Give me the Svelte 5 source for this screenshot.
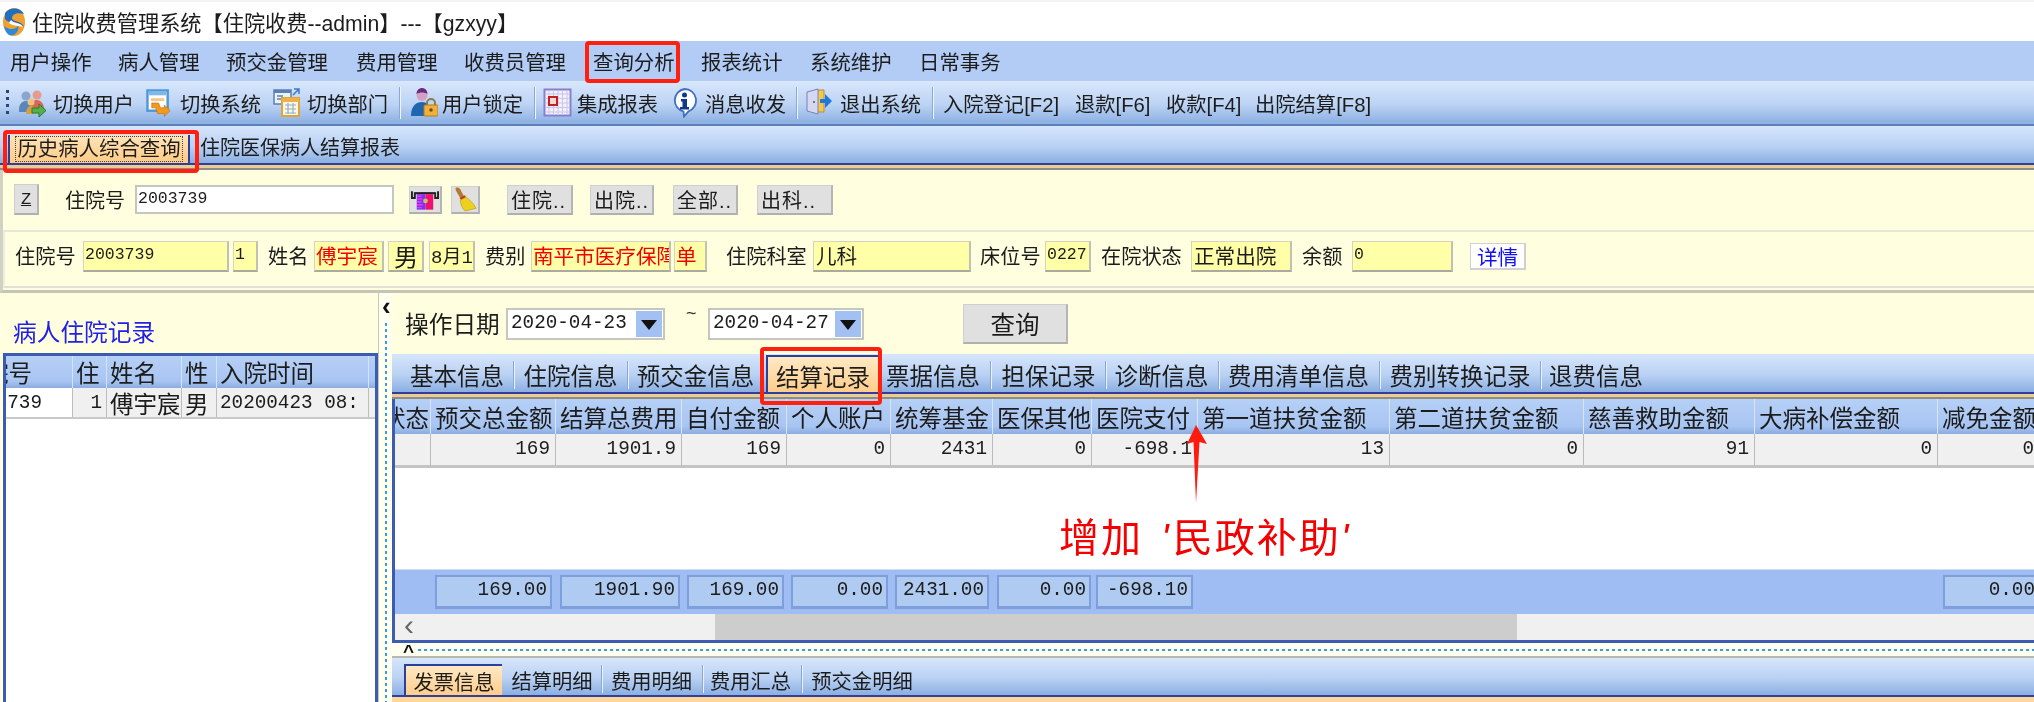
<script>
  function flow(items, origin = 0) {
    let p = origin;
    return items.map((i) => {
      const r = { ...i, w: i.e - i.x, m: i.x - p };
      p = i.e;
      return r;
    });
  }
  const t = (x, e, text, extra = {}) => ({ x, e, text, ...extra });

  const menu = flow([
    t(10, 92, '用户操作'), t(118, 200, '病人管理'), t(226, 329, '预交金管理'), t(356, 438, '费用管理'),
    t(464, 567, '收费员管理'), t(593, 675, '查询分析'), t(701, 783, '报表统计'), t(810, 892, '系统维护'), t(919, 1001, '日常事务')
  ]);

  const tools = flow([
    t(18, 47, '', { icon: 'users' }), t(53, 133, '切换用户'),
    t(146, 172, '', { icon: 'win' }), t(180, 260, '切换系统'),
    t(273, 300, '', { icon: 'dept' }), t(307, 388, '切换部门'),
    t(399, 401, '', { sep: true }),
    t(410, 438, '', { icon: 'lock' }), t(442, 523, '用户锁定'),
    t(534, 536, '', { sep: true }),
    t(543, 572, '', { icon: 'grid' }), t(577, 658, '集成报表'),
    t(672, 697, '', { icon: 'info' }), t(705, 786, '消息收发'),
    t(796, 798, '', { sep: true }),
    t(806, 832, '', { icon: 'door' }), t(840, 921, '退出系统'),
    t(932, 934, '', { sep: true }),
    t(943, 1060, '入院登记[F2]'), t(1075, 1150, '退款[F6]'), t(1166, 1241, '收款[F4]'), t(1255, 1372, '出院结算[F8]')
  ]);

  const fields = flow([
    t(15, 76, '住院号', { k: 'label' }),
    t(83, 229, '2003739', { k: 'num' }),
    t(233, 258, '1', { k: 'num' }),
    t(268, 308, '姓名', { k: 'label' }),
    t(314, 384, '傅宇宸', { k: 'red' }),
    t(388, 424, '男', { k: 'big' }),
    t(429, 475, '8月1', { k: 'num wide' }),
    t(485, 525, '费别', { k: 'label' }),
    t(531, 671, '南平市医疗保障', { k: 'red' }),
    t(674, 707, '单', { k: 'red' }),
    t(726, 807, '住院科室', { k: 'label' }),
    t(813, 971, '儿科', { k: 'plain' }),
    t(980, 1041, '床位号', { k: 'label' }),
    t(1045, 1091, '0227', { k: 'num' }),
    t(1101, 1182, '在院状态', { k: 'label' }),
    t(1191, 1292, '正常出院', { k: 'plain' }),
    t(1302, 1343, '余额', { k: 'label' }),
    t(1352, 1453, '0', { k: 'num' }),
    t(1470, 1526, '详情', { k: 'link' })
  ], 5);

  const qbtns = flow([
    t(507, 573, '住院..'), t(590, 654, '出院..'), t(673, 738, '全部..'), t(757, 833, '出科..')
  ], 480);

  const leftCols = flow([
    t(6, 73, '住院号', { v: '2003739', first: true, mono: true }),
    t(73, 107, '住', { v: '1', mono: true, ar: true }),
    t(107, 182, '姓名', { v: '傅宇宸' }),
    t(182, 217, '性', { v: '男' }),
    t(217, 369, '入院时间', { v: '20200423 08:', mono: true }),
    t(369, 400, '', { v: '' })
  ], 6);

  const midTabs = flow([
    t(410, 504, '基本信息'), t(513, 515, '', { sep: true }),
    t(524, 617, '住院信息'), t(627, 629, '', { sep: true }),
    t(638, 753, '预交金信息'),
    t(766, 878, '结算记录', { active: true }),
    t(886, 980, '票据信息'), t(990, 992, '', { sep: true }),
    t(1001, 1096, '担保记录'), t(1105, 1107, '', { sep: true }),
    t(1115, 1208, '诊断信息'), t(1218, 1220, '', { sep: true }),
    t(1228, 1369, '费用清单信息'), t(1379, 1381, '', { sep: true }),
    t(1389, 1531, '费别转换记录'), t(1540, 1542, '', { sep: true }),
    t(1549, 1643, '退费信息')
  ], 392);

  const cols = flow([
    t(395, 431, '状态', { v: '', clip: true }),
    t(431, 556, '预交总金额', { v: '169' }),
    t(556, 682, '结算总费用', { v: '1901.9' }),
    t(682, 787, '自付金额', { v: '169' }),
    t(787, 891, '个人账户', { v: '0' }),
    t(891, 993, '统筹基金', { v: '2431' }),
    t(993, 1092, '医保其他', { v: '0' }),
    t(1092, 1198, '医院支付', { v: '-698.1' }),
    t(1198, 1390, '第一道扶贫金额', { v: '13' }),
    t(1390, 1584, '第二道扶贫金额', { v: '0' }),
    t(1584, 1755, '慈善救助金额', { v: '91' }),
    t(1755, 1938, '大病补偿金额', { v: '0' }),
    t(1938, 2040, '减免金额', { v: '0' })
  ], 395);

  const totals = flow([
    t(435, 552, '169.00'), t(560, 680, '1901.90'), t(687, 784, '169.00'), t(791, 888, '0.00'),
    t(895, 989, '2431.00'), t(997, 1091, '0.00'), t(1096, 1193, '-698.10'), t(1943, 2040, '0.00')
  ], 395);

  const botTabs = flow([
    t(404, 502, '发票信息', { active: true }),
    t(512, 592, '结算明细'), t(601, 603, '', { sep: true }),
    t(611, 692, '费用明细'), t(702, 704, '', { sep: true }),
    t(710, 791, '费用汇总'), t(801, 803, '', { sep: true }),
    t(812, 912, '预交金明细')
  ], 392);
</script>

<div class="app">
  <div class="title">
    <svg class="logo" viewBox="0 0 24 30" width="24" height="30">
      <ellipse cx="12" cy="15" rx="11" ry="14" fill="#f0a030"/>
      <path d="M3 6 C8 0 18 0 22 7 C16 5 10 7 10 11 C10 15 21 14 22 20 C16 13 6 17 3 12 Z" fill="#1f6fc0"/>
      <path d="M2 19 C8 24 14 22 16 19 C18 24 12 30 7 28 C4 26 3 23 2 19Z" fill="#2c8ad8"/>
      <path d="M9 13 C12 17 18 15 21 20 C15 18 10 19 7 16Z" fill="#fff"/>
    </svg>
    <span>住院收费管理系统【住院收费--admin】---【gzxyy】</span>
  </div>

  <div class="menu">
    {#each menu as m}
      <span class="flowitem" style="width:{m.w}px;margin-left:{m.m}px">{m.text}</span>
    {/each}
  </div>

  <div class="toolbar">
    <span class="grip"></span>
    {#each tools as b}
      {#if b.sep}
        <span class="tsep flowitem" style="width:{b.w}px;margin-left:{b.m}px"></span>
      {:else if b.icon}
        <span class="flowitem ticon" style="width:{b.w}px;margin-left:{b.m}px">
          {#if b.icon === 'users'}
            <svg viewBox="0 0 29 30" width="29" height="30">
              <circle cx="8" cy="8" r="4.5" fill="#8aa6cf"/><path d="M1 22c0-6 3-9 7-9s6 2 7 5l-3 6H1z" fill="#5b86bd"/>
              <circle cx="19" cy="7" r="4.5" fill="#e79a8e"/><path d="M12 18c1-5 4-6 7-6s7 3 7 9h-9z" fill="#d9665b"/>
              <circle cx="13" cy="14" r="3.5" fill="#f2c27a"/><path d="M8 26c0-5 2-8 5-8l3 1v7z" fill="#d8a040"/>
              <path d="M14 20h7v-4l7 6.5-7 6.500v-4h-7z" fill="#55b04a" stroke="#2b7a2b"/>
            </svg>
          {:else if b.icon === 'win'}
            <svg viewBox="0 0 27 30" width="27" height="30">
              <rect x="1.500" y="2" width="21" height="21" fill="#fff" stroke="#4e97d8" stroke-width="2.500"/>
              <rect x="3" y="3" width="18" height="4" fill="#7db8ea"/>
              <rect x="5" y="10" width="14" height="3" fill="#f3c98a"/>
              <path d="M6 15h7l2 5h4v-3l6 6-6 6v-3h-7l-2-6H6z" fill="#f29a1f" stroke="#c8700c" stroke-width=".7"/>
            </svg>
          {:else if b.icon === 'dept'}
            <svg viewBox="0 0 27 30" width="27" height="30">
              <rect x="1" y="2" width="17" height="14" fill="#eaf2fc" stroke="#5b7fb2" stroke-width="1.500"/>
              <rect x="1" y="2" width="17" height="3" fill="#5b7fb2"/>
              <path d="M4 8h6M4 11h6" stroke="#5b7fb2" stroke-width="1.500"/>
              <path d="M21 1l5 0 0 5M26 1l-6 6" fill="none" stroke="#3c78c8" stroke-width="1.500"/>
              <rect x="9" y="10" width="17" height="18" fill="#fff7e0" stroke="#e0a43c" stroke-width="2"/>
              <rect x="9" y="10" width="17" height="4" fill="#eeb04a"/>
              <path d="M12 17h11M12 21h11M12 25h11M15 15v11M20 15v11" stroke="#8fb0d0" stroke-width="1.200"/>
            </svg>
          {:else if b.icon === 'lock'}
            <svg viewBox="0 0 28 30" width="28" height="30">
              <ellipse cx="12" cy="7" rx="5.500" ry="6" fill="#d4a0c4"/><path d="M6.500 6c0-4 3-6 5.500-6s5.500 2 5.500 6c-3-2-8-2-11 0z" fill="#6a2a80"/>
              <path d="M1 28c0-10 5-14 11-14 3 0 5 1 6 2v12z" fill="#1f66b0"/>
              <path d="M17 18v-3a4 4 0 0 1 8 0v3" fill="none" stroke="#8a7a50" stroke-width="2"/>
              <rect x="14" y="17" width="14" height="11" rx="1" fill="#f0b040" stroke="#b87a1a"/>
              <circle cx="21" cy="22" r="1.800" fill="#7a4a0a"/>
            </svg>
          {:else if b.icon === 'grid'}
            <svg viewBox="0 0 29 30" width="29" height="30">
              <rect x="1.500" y="1.500" width="26" height="26" fill="#f3f0fb" stroke="#8880c8" stroke-width="2"/>
              <path d="M6 2v25M10.500 2v25M15 2v25M19.500 2v25M24 2v25M2 6h25M2 10.500h25M2 15h25M2 19.500h25M2 24h25" stroke="#c8c4ea" stroke-width="1"/>
              <rect x="6" y="9" width="8" height="8" fill="#f4d8d8" stroke="#c02020" stroke-width="2"/>
            </svg>
          {:else if b.icon === 'info'}
            <svg viewBox="0 0 25 30" width="25" height="30">
              <path d="M12.500 1a11.500 11.500 0 0 1 4 22.300L12 28.500l-.5-5A11.500 11.500 0 0 1 12.500 1z" fill="#fff" stroke="#3f70c0" stroke-width="1.800"/>
              <circle cx="12.500" cy="7" r="2.500" fill="#0f3a8c"/>
              <path d="M9 11h6v8h2v2.500H8V19h2.500v-5.500H9z" fill="#0f3a8c"/>
            </svg>
          {:else}
            <svg viewBox="0 0 26 30" width="26" height="30">
              <path d="M10 2h8v22h-8z" fill="#f2c84e" stroke="#b89030"/>
              <path d="M1 4l11-3v25l-11-3z" fill="#d4d8f0" stroke="#7a80b8"/>
              <circle cx="8" cy="14" r="1" fill="#556"/>
              <path d="M14 11h5V6l7 7-7 7v-5h-5z" fill="#1f78e0"/>
            </svg>
          {/if}
        </span>
      {:else}
        <span class="flowitem" style="width:{b.w}px;margin-left:{b.m}px">{b.text}</span>
      {/if}
    {/each}
  </div>

  <div class="strip top">
    <div class="toptab"><span>历史病人综合查询</span></div>
    <span class="nexttab">住院医保病人结算报表</span>
  </div>
  <div class="rule"><i class="blue"></i><i class="tan"></i><i class="gray"></i></div>

  <section class="patient">
    <div class="row1">
      <button class="btn z">Z</button>
      <span class="lab1">住院号</span>
      <span class="inp">2003739</span>
      <button class="btn ic1">
        <svg viewBox="0 0 31 26" width="31" height="26">
          <path d="M2 5v7h3V7h21v5h3V5" fill="none" stroke="#222" stroke-width="2"/>
          <path d="M5 7h21" stroke="#222" stroke-width="1.500"/>
          <rect x="7" y="8" width="9" height="16" fill="#8030f0"/><rect x="16" y="8" width="8" height="16" fill="#f01070"/>
          <path d="M7 10h5M7 13h6M7 16h5M7 19h6M7 22h5" stroke="#ff40f0" stroke-width="1.200"/>
          <circle cx="16" cy="15" r="2.500" fill="#c8c060"/>
        </svg>
      </button>
      <button class="btn ic2">
        <svg viewBox="0 0 28 28" width="28" height="28">
          <path d="M4 2c3-1 5 1 6 4l3 5-4 2-3-5C5 6 3 4 4 2z" fill="#b07a30"/>
          <path d="M8 13l6-3 1 2-5 3z" fill="#c83020"/>
          <path d="M9 15l6-3c4 3 8 6 11 12-4 1-8 2-12 3-3-3-5-7-5-12z" fill="#ecd020" stroke="#b89a10" stroke-width=".7"/>
        </svg>
      </button>
      {#each qbtns as q}
        <button class="btn q" style="width:{q.w}px;margin-left:{q.m}px">{q.text}</button>
      {/each}
    </div>
    <div class="group">
      {#each fields as f}
        <span class="f {f.k}" style="width:{f.w}px;margin-left:{f.m}px">{f.text}</span>
      {/each}
    </div>
  </section>

  <div class="lower">
    <aside class="side">
      <div class="sidetitle">病人住院记录</div>
      <div class="lgrid">
        <div class="lhead">
          {#each leftCols as c}
            <span class="lh" class:first={c.first} style="width:{c.w}px">{c.text}</span>
          {/each}
        </div>
        <div class="lrow">
          {#each leftCols as c}
            <span class="lc" class:first={c.first} class:mono={c.mono} class:ar={c.ar} style="width:{c.w}px">{c.v}</span>
          {/each}
        </div>
      </div>
    </aside>

    <div class="vsplit"><b>‹</b><i></i></div>

    <main class="pane">
      <div class="daterow">
        <span class="dlabel">操作日期</span>
        <span class="combo one"><em>2020-04-23</em><u></u></span>
        <span class="tilde">~</span>
        <span class="combo two"><em>2020-04-27</em><u></u></span>
        <button class="btn search">查询</button>
      </div>

      <div class="strip mid">
        {#each midTabs as b}
          {#if b.sep}
            <i class="tabsep" style="margin-left:{b.m}px"></i>
          {:else}
            <span class="mt" class:on={b.active} style="width:{b.w}px;margin-left:{b.m}px">{b.text}</span>
          {/if}
        {/each}
      </div>
      <div class="rule"><i class="blue"></i><i class="tan"></i><i class="gray"></i></div>

      <div class="grid">
        <div class="ghead">
          {#each cols as c}
            <span class="gh" class:clip={c.clip} style="width:{c.w}px">{c.text}</span>
          {/each}
        </div>
        <div class="grow">
          {#each cols as c}
            <span class="gc" style="width:{c.w}px">{c.v}</span>
          {/each}
        </div>
        <div class="gblank"></div>
        <div class="totals">
          {#each totals as c}
            <span class="tot" style="width:{c.w}px;margin-left:{c.m}px">{c.text}</span>
          {/each}
        </div>
        <div class="hscroll"><b>‹</b><i></i></div>
      </div>

      <div class="hsplit"><b>^</b><i></i></div>

      <div class="strip bot">
        {#each botTabs as b}
          {#if b.sep}
            <i class="tabsep" style="margin-left:{b.m}px"></i>
          {:else}
            <span class="bt" class:on={b.active} style="width:{b.w}px;margin-left:{b.m}px">{b.text}</span>
          {/if}
        {/each}
      </div>
      <div class="botrule"></div>
    </main>
  </div>

  <span class="mark m1"></span>
  <span class="mark m2"></span>
  <span class="mark m3"></span>
  <svg class="arrow" viewBox="0 0 24 80" width="24" height="80">
    <path d="M10 0 L21 19 L13.500 17 L10 78 L7.500 17 L1 19 Z" fill="#ff1a10"/>
  </svg>
  <span class="note">增加<em>'</em>民政补助<em>'</em></span>
</div>

<style>
  :global(body) { margin: 0; background: #fff; }
  .app {
    position: relative; width: 2034px; height: 702px; overflow: hidden; background: #fff;
    font-family: "Liberation Sans", "Noto Sans CJK SC", sans-serif; font-size: 20px; color: #1c1c1c;
    filter: blur(0.45px);
  }
  .flowitem { flex: none; white-space: nowrap; }
  .title {
    box-sizing: border-box; height: 41px; border-top: 2px solid #f3f3f3; display: flex; align-items: center;
    font-size: 21.2px; padding-left: 2px; gap: 6px;
  }
  .logo { flex: none; }
  .menu { height: 40px; background: #b2ccf6; display: flex; align-items: center; font-size: 20.4px; }
  .toolbar {
    box-sizing: border-box; height: 45px; position: relative; display: flex; align-items: center;
    background: linear-gradient(#d8e7fc, #bcd3f4 55%, #8fb2e4 95%); border-bottom: 2px solid #5d80b6; font-size: 20.3px;
  }
  .grip { position: absolute; left: 6px; top: 9px; height: 26px; width: 3px;
    background: repeating-linear-gradient(#2a4478 0 3px, transparent 3px 7px); }
  .ticon { display: flex; align-items: center; }
  .tsep { height: 32px; background: linear-gradient(90deg, #8aa8d4 50%, #eef5ff 50%); }

  .strip { display: flex; background: linear-gradient(#d6e6fc, #b9d1f3 55%, #8bafe2); position: relative; }
  .top { height: 37px; align-items: flex-end; }
  .toptab {
    box-sizing: border-box; flex: none; width: 182px; margin-left: 8px; height: 28px;
    background: linear-gradient(#ffe4b8, #ffcb85); border-left: 2px solid #2c3f9d; border-right: 2px solid #2c3f9d;
    display: flex; align-items: center; justify-content: center; font-size: 20.4px;
  }
  .toptab span { outline: 1px dotted #444; outline-offset: 1px; white-space: nowrap; line-height: 22px; }
  .nexttab { margin-left: 10px; align-self: center; margin-top: 4px; font-size: 20px; white-space: nowrap; }
  .rule { display: flex; flex-direction: column; }
  .rule i { display: block; }
  .blue { height: 2px; background: #2f3f9f; }
  .tan { height: 3px; background: #efcb94; }
  .gray { height: 2px; background: #8d8d88; }

  .patient { box-sizing: border-box; height: 123px; background: #ffffe0; border-left: 3px solid #d2d2c4; border-bottom: 3px solid #c4c4b8; }
  .row1 { display: flex; align-items: center; padding: 14px 0 0 11px; height: 31px; }
  .btn { box-sizing: border-box; padding: 0; margin: 0; background: #e0e0e0; border: 1px solid #cfcfcf; border-right: 2px solid #b5b5b5; border-bottom: 2px solid #b0b0b0;
    font: inherit; color: inherit; display: flex; align-items: center; justify-content: center; flex: none; }
  .z { width: 25px; height: 31px; font-family: "Liberation Mono", monospace; font-size: 17px; text-decoration: underline; }
  .lab1 { margin-left: 26px; width: 60px; font-size: 20px; white-space: nowrap; }
  .inp { box-sizing: border-box; width: 259px; height: 29px; margin-left: 10px; background: #fff; border: 2px solid #c6c6c0; display: flex; align-items: center; padding: 0 0 2px 1px;
    font-family: "Liberation Mono", monospace; font-size: 16.500px; }
  .ic1 { width: 33px; height: 28px; margin-left: 15px; }
  .ic2 { width: 29px; height: 28px; margin-left: 9px; }
  .q { height: 30px; font-size: 20px; justify-content: flex-start; padding-left: 3px; white-space: nowrap; letter-spacing: 1px; }
  .group { box-sizing: border-box; height: 58px; margin: 15px 0 0; border-top: 2px solid #e6e6da; border-bottom: 2px solid #e2e2d4; border-left: 2px solid #eeeede; display: flex; align-items: flex-start; padding-top: 9px; }
  .f { box-sizing: border-box; flex: none; height: 31px; display: flex; align-items: center; overflow: hidden; white-space: nowrap; }
  .label { font-size: 20.2px; padding-bottom: 2px; }
  .num, .red, .plain, .big { background: #ffffa8; border: 1px solid #d4d4c0; border-right: 2px solid #c0c0b4; border-bottom: 2px solid #aaaaa0; padding: 0 0 3px 1px; }
  .num { font-family: "Liberation Mono", "Noto Sans CJK SC", monospace; font-size: 16.500px; }
  .num.wide { font-size: 19px; }
  .red { color: #f40000; font-size: 20.6px; }
  .plain { font-size: 20.6px; padding-left: 2px; }
  .big { font-size: 24px; justify-content: center; padding-bottom: 2px; }
  .link { margin-top: 2px; height: 27px; background: #fff; color: #1010f0; border: 1px solid #d0d0d0; border-right-width: 2px; border-bottom-width: 2px; font-size: 20.6px; justify-content: center; }

  .lower { height: 409px; display: flex; background: #ffffe0; }
  .side { flex: none; width: 378px; box-sizing: border-box; padding-left: 3px; display: flex; flex-direction: column; }
  .sidetitle { height: 60px; box-sizing: border-box; padding: 24px 0 0 10px; color: #2020e8; font-size: 23.700px; line-height: 32px; }
  .lgrid { flex: 1; background: #fff; border: 3px solid #3b5cb0; border-bottom: 0; overflow: hidden; }
  .lhead, .lrow { display: flex; width: 420px; }
  .lhead { height: 32px; background: linear-gradient(#b6d0f6, #a8c5f2 78%, #8cacdf); }
  .lrow { background: #f0f0f0; border-bottom: 2px solid #c9c9c9; height: 29px; }
  .lh, .lc { box-sizing: border-box; flex: none; overflow: hidden; white-space: nowrap; display: flex; align-items: center; font-size: 23.500px; }
  .lh { border-right: 1px solid #d5e3f8; padding-left: 3px; }
  .lh.first { justify-content: flex-end; padding-right: 40px; padding-left: 0; }
  .lc { border-right: 1px solid #bdbdbd; padding-left: 3px; }
  .lc.first { background: #fff; justify-content: flex-end; padding-right: 30px; padding-left: 0; }
  .lc.mono { font-family: "Liberation Mono", monospace; font-size: 19.300px; }
  .lc.ar { justify-content: flex-end; padding-right: 4px; }

  .vsplit { flex: none; width: 14px; position: relative; background: #fffff0; border-left: 1px solid #c8c8b8; box-sizing: border-box; }
  .vsplit b { position: absolute; left: 3px; top: 2px; font-size: 26px; line-height: 22px; color: #111; }
  .vsplit i { position: absolute; left: 6px; top: 30px; bottom: 0; width: 2px; background: repeating-linear-gradient(#3b9be8 0 3px, transparent 3px 6px); }

  .pane { flex: 1; min-width: 0; display: flex; flex-direction: column; }
  .daterow { height: 61px; flex: none; box-sizing: border-box; display: flex; align-items: flex-start; }
  .dlabel { font-size: 23.700px; margin: 17px 0 0 13px; width: 96px; white-space: nowrap; line-height: 30px; }
  .combo { box-sizing: border-box; flex: none; height: 32px; margin-top: 15px; background: #fff; border: 2px solid #c6c6c0; display: flex; align-items: stretch; position: relative; }
  .combo em { font-style: normal; font-family: "Liberation Mono", monospace; font-size: 19.300px; padding: 2px 0 0 3px; white-space: nowrap; }
  .combo u { position: absolute; right: 1px; top: 1px; bottom: 1px; width: 26px; background: #a3c0f3; }
  .combo u::after { content: ""; position: absolute; left: 5px; top: 9px; border: 8px solid transparent; border-top: 10px solid #111; border-bottom: 0; }
  .one { width: 159px; margin-left: 5px; }
  .two { width: 156px; margin-left: 14px; }
  .tilde { margin: 10px 0 0 21px; width: 8px; font-size: 18px; color: #333; }
  .search { width: 105px; height: 40px; margin: 11px 0 0 99px; font-size: 24.500px; }

  .mid { height: 38px; align-items: flex-end; flex: none; }
  .mt { flex: none; box-sizing: border-box; height: 37px; display: flex; align-items: center; justify-content: center; white-space: nowrap; font-size: 23.500px; padding-top: 3px; }
  .mt.on { background: linear-gradient(#ffe9c4, #ffcd8a); border-top: 2px solid #2c3f9d; border-left: 2px solid #2c3f9d; }
  .tabsep { flex: none; width: 2px; height: 28px; align-self: center; margin-top: 4px; background: linear-gradient(90deg, #8aa8d4 50%, #e8f1ff 50%); }

  .grid { flex: 1; min-height: 0; background: #fff; border-left: 3px solid #3b5cb0; overflow: hidden; display: flex; flex-direction: column; }
  .ghead, .grow { display: flex; flex: none; }
  .ghead { height: 35px; background: linear-gradient(#b6d0f6, #a8c5f2 78%, #8cacdf); }
  .gh { box-sizing: border-box; flex: none; white-space: nowrap; overflow: hidden; font-size: 23.500px; display: flex; align-items: center; padding-left: 4px; border-right: 1px solid #d8e5f9; }
  .gh.clip { justify-content: flex-end; padding: 0 1px 0 0; }
  .grow { height: 31px; background: #f0f0f0; border-bottom: 3px solid #c4c4c4; }
  .gc { box-sizing: border-box; flex: none; font-family: "Liberation Mono", monospace; font-size: 19.300px; text-align: right; padding: 4px 5px 0 0; border-right: 1px solid #bbb; }
  .gblank { height: 101px; flex: none; background: #fff; border-bottom: 1px solid #d3dcea; }
  .totals { height: 44px; flex: none; background: #9fbdf3; display: flex; align-items: center; }
  .tot { box-sizing: border-box; flex: none; height: 34px; background: #afcbf1; border: 2px solid #7f9fdc; border-bottom-width: 3px; font-family: "Liberation Mono", monospace; font-size: 19.300px; text-align: right; padding: 2px 3px 0 0; }
  .hscroll { height: 29px; flex: none; background: #f0f0f0; border-bottom: 3px solid #3b5cb0; box-sizing: border-box; position: relative; }
  .hscroll b { position: absolute; left: 9px; top: -1px; font-size: 30px; line-height: 24px; color: #666; font-weight: 400; }
  .hscroll i { position: absolute; left: 320px; width: 802px; top: 0; bottom: 0; background: #cdcdcd; }

  .hsplit { flex: none; height: 13px; background: #fffff0; border-bottom: 2px solid #b8b8b0; position: relative; }
  .hsplit b { position: absolute; left: 11px; top: -1px; font-size: 19px; color: #111; line-height: 20px; }
  .hsplit i { position: absolute; left: 26px; right: 0; top: 6px; height: 2px; background: repeating-linear-gradient(90deg, #3b9be8 0 3px, transparent 3px 6px); }

  .bot { height: 37px; flex: none; align-items: flex-end; }
  .bt { flex: none; box-sizing: border-box; height: 31px; display: flex; align-items: center; justify-content: center; white-space: nowrap; font-size: 20.300px; }
  .bt.on { background: linear-gradient(#ffe9c4, #ffcd8a); border-top: 2px solid #2c3f9d; border-left: 2px solid #2c3f9d; }
  .botrule { flex: none; height: 5px; border-top: 2px solid #2f3f9f; background: #ffd79a; }

  .mark { position: absolute; box-sizing: border-box; border: 4px solid #ff2010; border-radius: 4px; }
  .m1 { left: 585px; top: 41px; width: 95px; height: 42px; }
  .m2 { left: 3px; top: 130px; width: 196px; height: 43px; }
  .m3 { left: 760px; top: 347px; width: 122px; height: 58px; }
  .arrow { position: absolute; left: 1186px; top: 425px; }
  .note { position: absolute; left: 1059px; top: 512px; font-size: 40px; line-height: 52px; color: #f40000; white-space: nowrap; letter-spacing: 2px; }
  .note em { font-style: italic; margin: 0 2px 0 0; }
  .note em:first-of-type { margin-left: 18px; }
</style>
